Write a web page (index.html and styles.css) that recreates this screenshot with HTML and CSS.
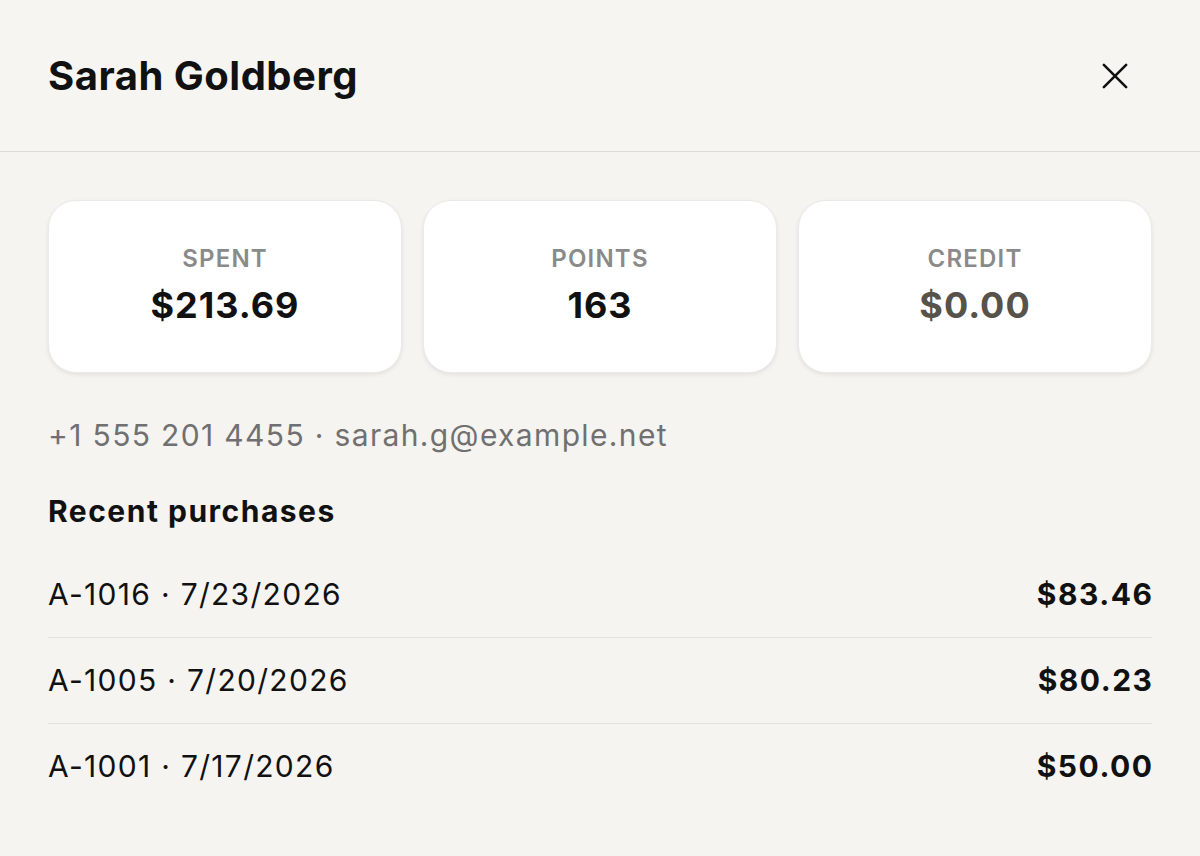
FILE: index.html
```html
<!DOCTYPE html>
<html lang="en">
<head>
    <meta charset="UTF-8">
    <meta name="viewport" content="width=device-width, initial-scale=1.0">
    <title>Customer</title>
    <link rel="stylesheet" href="styles.css">
</head>
<body>

<div class="sheet">
    <!-- Header -->
    <div class="sheet-header">
        <h1>Sarah Goldberg</h1>
        <button class="close" aria-label="Close">
            <svg width="28" height="28" viewBox="0 0 28 28" fill="none" stroke="#111" stroke-width="2.8" stroke-linecap="round">
                <path d="M2 2L26 26M26 2L2 26"/>
            </svg>
        </button>
    </div>

    <div class="sheet-body">
        <!-- Stats -->
        <div class="stats">
            <div class="stat">
                <span class="stat-label">SPENT</span>
                <span class="stat-value">$213.69</span>
            </div>
            <div class="stat">
                <span class="stat-label">POINTS</span>
                <span class="stat-value">163</span>
            </div>
            <div class="stat">
                <span class="stat-label">CREDIT</span>
                <span class="stat-value muted">$0.00</span>
            </div>
        </div>

        <p class="contact">+1 555 201 4455 · sarah.g@example.net</p>

        <h2>Recent purchases</h2>
        <ul class="purchases">
            <li><span>A-1016 · 7/23/2026</span><strong>$83.46</strong></li>
            <li><span>A-1005 · 7/20/2026</span><strong>$80.23</strong></li>
            <li><span>A-1001 · 7/17/2026</span><strong>$50.00</strong></li>
        </ul>
    </div>
</div>

</body>
</html>
```

FILE: styles.css
```css
* {
    box-sizing: border-box;
    margin: 0;
    padding: 0;
}

body {
    font-family: Inter, 'Noto Sans', sans-serif;
    background-color: #f5f4f1;
    color: #111;
}

/* Header */
.sheet-header {
    height: 152px;
    padding: 0 48px;
    display: flex;
    align-items: center;
    justify-content: space-between;
    background-color: #f6f5f2;
    border-bottom: 1px solid #dddbd7;
}

.sheet-header h1 {
    font-size: 40px;
    font-weight: 700;
    letter-spacing: 0.5px;
    color: #111;
}

.close {
    width: 48px;
    height: 48px;
    margin-right: 13px;
    border: none;
    background: none;
    display: flex;
    align-items: center;
    justify-content: center;
    cursor: pointer;
}

.close svg {
    width: 26px;
    height: 26px;
}

/* Body */
.sheet-body {
    padding: 48px 48px 0;
}

.stats {
    display: grid;
    grid-template-columns: repeat(3, 1fr);
    gap: 21px;
}

.stat {
    height: 173px;
    background: #fff;
    border: 1px solid #eceae6;
    border-radius: 28px;
    box-shadow: 0 2px 4px rgba(0, 0, 0, 0.08);
    display: flex;
    flex-direction: column;
    align-items: center;
    justify-content: center;
    gap: 9px;
    padding-bottom: 2px;
}

.stat-label {
    font-size: 24px;
    font-weight: 600;
    line-height: 30px;
    letter-spacing: 1.2px;
    color: #8a8a8a;
}

.stat-value {
    font-size: 36px;
    font-weight: 700;
    line-height: 44px;
    letter-spacing: 1px;
    color: #111;
}

.stat-value.muted {
    color: #57524a;
}

.contact {
    margin-top: 44px;
    font-size: 30px;
    line-height: 36px;
    letter-spacing: 1.35px;
    color: #707070;
}

h2 {
    margin-top: 40px;
    font-size: 30px;
    font-weight: 700;
    line-height: 36px;
    letter-spacing: 1.5px;
}

.purchases {
    list-style: none;
    margin-top: 23px;
}

.purchases li {
    display: flex;
    justify-content: space-between;
    align-items: center;
    padding: 24px 0;
    font-size: 30px;
    line-height: 37px;
    letter-spacing: 1.3px;
    border-bottom: 1px solid #e4e2de;
}

.purchases li:last-child {
    border-bottom: none;
}

.purchases strong {
    font-weight: 700;
    letter-spacing: 1.5px;
    margin-right: -1.5px;
}
```
